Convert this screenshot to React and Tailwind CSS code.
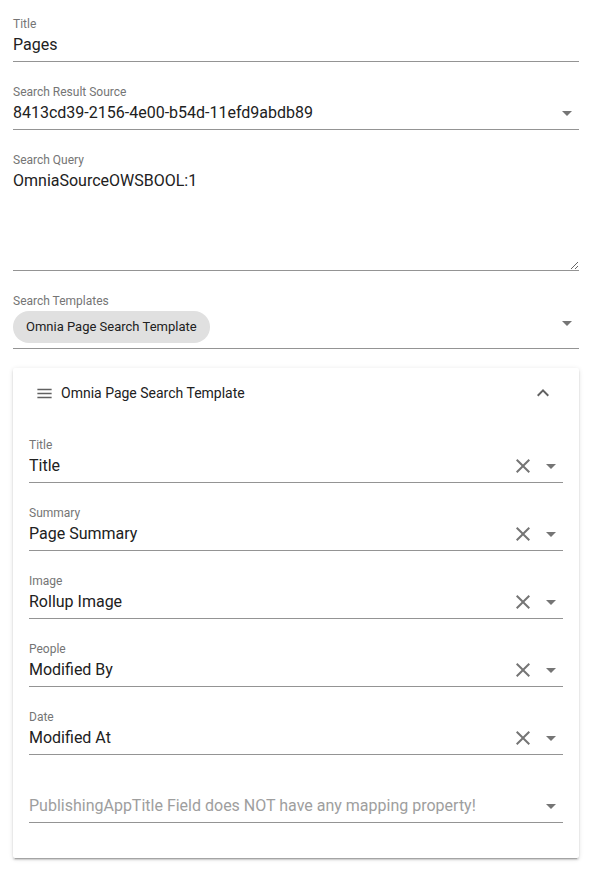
import React from 'react';

const FONT = { fontFamily: 'Roboto, "Noto Sans", Arial, sans-serif' };

const ArrowDrop = () => (
  <svg viewBox="0 0 24 24" className="h-6 w-6 shrink-0 fill-[#757575]">
    <path d="M7 10l5 5 5-5z" />
  </svg>
);

const CloseIcon = () => (
  <svg viewBox="0 0 24 24" className="h-6 w-6 shrink-0 fill-[#757575]">
    <path d="M19,6.41L17.59,5L12,10.59L6.41,5L5,6.41L10.59,12L5,17.59L6.41,19L12,13.41L17.59,19L19,17.59L13.41,12L19,6.41Z" />
  </svg>
);

const MenuIcon = () => (
  <svg viewBox="0 0 24 24" className="h-[19px] w-[19px] shrink-0 fill-[#616161]">
    <path d="M3,6H21V8H3V6M3,11H21V13H3V11M3,16H21V18H3V16Z" />
  </svg>
);

const ChevronUp = () => (
  <svg viewBox="0 0 24 24" className="h-6 w-6 shrink-0 fill-[#616161]">
    <path d="M7.41,15.41L12,10.83L16.59,15.41L18,14L12,8L6,14L7.41,15.41Z" />
  </svg>
);

const Field = ({ label, value, placeholder, clearable, select }) => (
  <div className="mb-[22px]">
    <div className="h-4 text-xs leading-4 text-[#757575]">{label}</div>
    <div className="flex h-[30px] items-start border-b border-[#949494] pt-px">
      <div
        className={`flex-1 truncate text-base leading-6 ${
          value ? 'text-[#212121]' : 'text-[#9e9e9e]'
        }`}
      >
        {value || placeholder}
      </div>
      {clearable && (
        <div className="mr-1">
          <CloseIcon />
        </div>
      )}
      {select && <ArrowDrop />}
    </div>
  </div>
);

const MAPPINGS = [
  { label: 'Title', value: 'Title' },
  { label: 'Summary', value: 'Page Summary' },
  { label: 'Image', value: 'Rollup Image' },
  { label: 'People', value: 'Modified By' },
  { label: 'Date', value: 'Modified At' },
];

export default function App() {
  return (
    <div className="min-h-screen bg-white pl-[13px] pr-[14px] pt-4 pb-4" style={FONT}>
      <Field label="Title" value="Pages" />
      <Field
        label="Search Result Source"
        value="8413cd39-2156-4e00-b54d-11efd9abdb89"
        select
      />

      <div className="mb-[22px]">
        <div className="h-4 text-xs leading-4 text-[#757575]">Search Query</div>
        <div className="border-b border-[#949494] pt-px">
          <textarea
            readOnly
            defaultValue="OmniaSourceOWSBOOL:1"
            className="block h-[101px] w-full resize-y bg-transparent text-base leading-6 text-[#212121] outline-none"
            style={FONT}
          />
        </div>
      </div>

      <div className="mb-[19px]">
        <div className="h-4 text-xs leading-4 text-[#757575]">Search Templates</div>
        <div className="flex items-start border-b border-[#949494] pt-[2px] pb-[5px]">
          <div className="flex-1">
            <span className="inline-flex h-8 items-center rounded-full bg-[#e0e0e0] px-[13px] text-[13px] text-[#212121]">
              Omnia Page Search Template
            </span>
          </div>
          <ArrowDrop />
        </div>
      </div>

      <div className="rounded-[2px] bg-white shadow-[0_3px_1px_-2px_rgba(0,0,0,0.2),0_2px_2px_0_rgba(0,0,0,0.14),0_1px_5px_0_rgba(0,0,0,0.12)]">
        <div className="flex h-12 items-center pl-[22px] pr-6 pt-[2px]">
          <MenuIcon />
          <span className="ml-[7px] flex-1 text-sm text-[#212121]">
            Omnia Page Search Template
          </span>
          <ChevronUp />
        </div>
        <div className="px-4 pt-[21px] pb-[13px]">
          {MAPPINGS.map((m) => (
            <Field key={m.label} label={m.label} value={m.value} clearable select />
          ))}
          <Field
            label=""
            placeholder="PublishingAppTitle Field does NOT have any mapping property!"
            select
          />
        </div>
      </div>
    </div>
  );
}
